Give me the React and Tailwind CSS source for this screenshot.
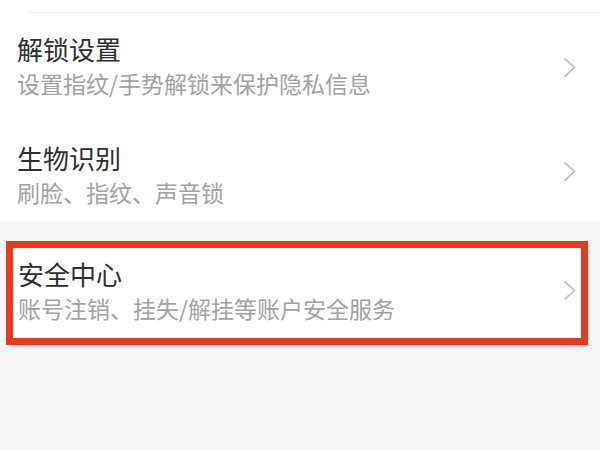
import React from 'react';

const Chevron = () => (
  <svg width="13" height="21" viewBox="0 0 13 21" className="shrink-0">
    <polyline points="1.5,1.5 11.5,10.5 1.5,19.5" fill="none" stroke="#c6c6c6" strokeWidth="1.8" />
  </svg>
);

const ItemText = ({ title, desc }) => (
  <div className="flex flex-col">
    <div className="text-[26px] leading-[32px] text-[#2e2e2e]">{title}</div>
    <div className="mt-[3px] text-[23px] leading-[30px] text-[#a2a2a2]">{desc}</div>
  </div>
);

const App = () => {
  return (
    <div className="h-[450px] w-[600px] overflow-hidden bg-[#f6f6f6] font-['Noto_Sans_CJK_SC','Noto_Sans',sans-serif]">
      <div className="bg-white">
        <div className="h-[12px]" />
        <div className="ml-[28px] h-px bg-[#efefef]" />

        <div className="flex h-[109px] items-center justify-between pl-[17px] pr-[24px]">
          <div className="self-start pt-[20px]">
            <ItemText title="解锁设置" desc="设置指纹/手势解锁来保护隐私信息" />
          </div>
          <Chevron />
        </div>

        <div className="flex h-[99px] items-center justify-between pl-[17px] pr-[24px]">
          <div className="self-start pt-[20px]">
            <ItemText title="生物识别" desc="刷脸、指纹、声音锁" />
          </div>
          <Chevron />
        </div>
      </div>

      <div className="pt-[20px]">
        <div className="mx-[6px] mr-[12px] border-[7px] border-[#e83a1e] bg-white">
          <div className="flex h-[90px] items-center justify-between pb-[6px] pl-[5px] pr-[5px]">
            <ItemText title="安全中心" desc="账号注销、挂失/解挂等账户安全服务" />
            <Chevron />
          </div>
        </div>
      </div>
    </div>
  );
};

export default App;
